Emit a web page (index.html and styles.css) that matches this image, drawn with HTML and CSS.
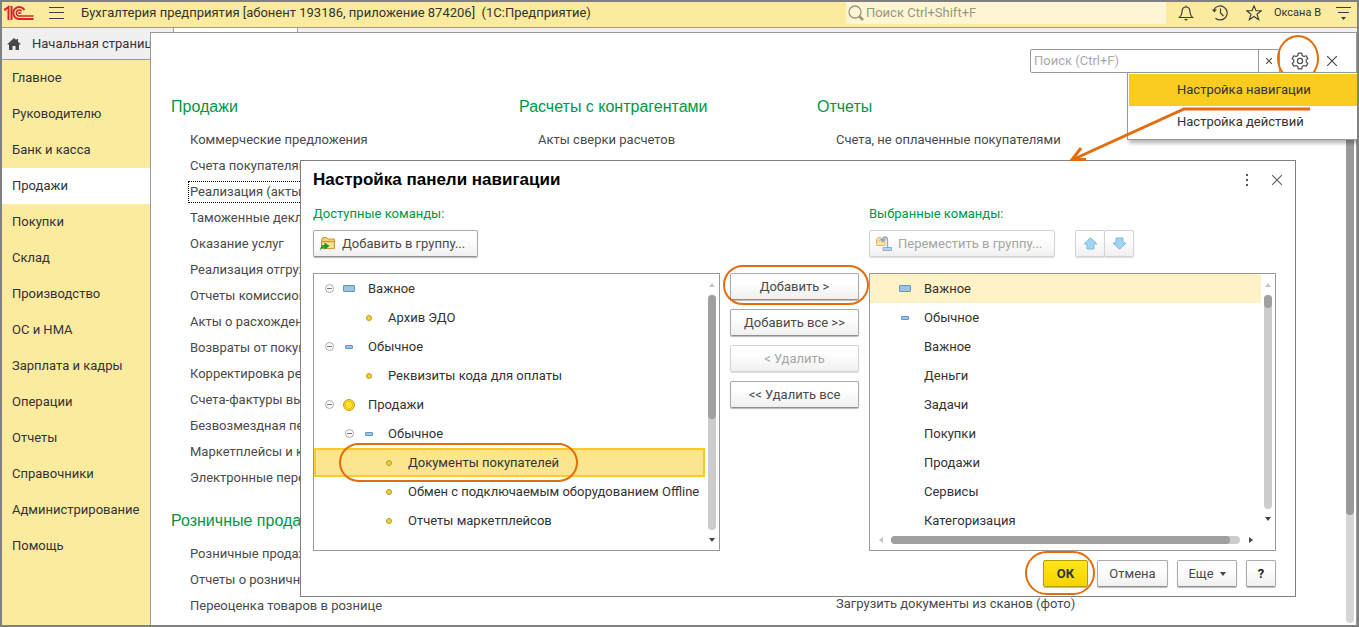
FILE: index.html
```html
<!DOCTYPE html>
<html lang="ru">
<head>
<meta charset="utf-8">
<title>Бухгалтерия предприятия</title>
<link rel="stylesheet" href="styles.css">
</head>
<body>
<div class="app">
  <header class="topbar">
    <svg class="logo" width="30" height="16" viewBox="0 0 30 16" fill="none" stroke="#d8232a" stroke-width="2">
      <path d="M0 4.500h2.500M4.500 15V2L1 4.500M7.500 15V1" stroke-width="2"/>
      <path d="M20.500 5A6 6 0 1 0 15.500 14H29.500"/>
      <path d="M17.500 6A3 3 0 1 0 15.500 11H29.500" stroke-width="1.500"/>
      <path d="M14 8h3.500" stroke-width="1.500"/>
    </svg>
    <button class="icon-btn burger" aria-label="Меню">
      <svg width="15" height="12" viewBox="0 0 15 12" stroke="#404040"><path d="M0 .5h15M0 5.500h15M0 11.500h15"/></svg>
    </button>
    <h1 class="app-title">Бухгалтерия предприятия [абонент 193186, приложение 874206]&nbsp; (1С:Предприятие)</h1>
    <label class="global-search">
      <svg width="16" height="16" viewBox="0 0 16 16" fill="none" stroke="#9b957c"><circle cx="7" cy="7" r="6" stroke-width="1.300"/><path d="M11 11l4 4" stroke-width="2.500"/></svg>
      <input type="text" placeholder="Поиск Ctrl+Shift+F" aria-label="Поиск">
    </label>
    <div class="tools">
      <button class="icon-btn" aria-label="Уведомления">
        <svg width="16" height="16" viewBox="0 0 16 16" fill="none" stroke="#3c3c3c" stroke-width="1.200"><path d="M8 .5v1.500M1.500 12.500C4 10.500 3.800 9 4 6.500 4.200 3.500 5.500 2 8 2s3.800 1.500 4 4.500c.2 2.500 0 4 2.500 6z"/><path d="M6 14h4l-1.500 1.500h-1z" fill="#3c3c3c" stroke="none"/></svg>
      </button>
      <button class="icon-btn" aria-label="История">
        <svg width="16" height="16" viewBox="0 0 16 16" fill="none" stroke="#3c3c3c" stroke-width="1.200"><path d="M1.800 5A7 7 0 1 1 3.500 13.200M8.500 3.500V8l3 3"/><path d="M0 4.500h5L2.300 7.500z" fill="#3c3c3c" stroke="none"/></svg>
      </button>
      <button class="icon-btn" aria-label="Избранное">
        <svg width="16" height="16" viewBox="0 0 16 16" fill="none" stroke="#3c3c3c" stroke-width="1.100"><path d="M8 .8l2 5h5.300l-4.300 3.400 1.700 5.500L8 11.500l-4.700 3.200L5 9.200.7 5.800H6z"/></svg>
      </button>
    </div>
    <span class="user">Оксана В</span>
    <button class="icon-btn service" aria-label="Сервис">
      <svg width="15" height="13" viewBox="0 0 15 13" stroke="#3c3c3c"><path d="M0 .5h15M2 5.500h11"/><path d="M5 10h5l-2.500 3z" fill="#3c3c3c" stroke="none"/></svg>
    </button>
  </header>

  <div class="body">
    <aside class="side">
      <a class="home" href="#">
        <svg width="14" height="12" viewBox="0 0 14 12" fill="#484848"><path d="M7 0L0 6.500h2V12h3.500V8h3v4H12V6.500h2L11 3.700V1H9.500v1.300z"/></svg>
        <span>Начальная страница</span>
      </a>
      <nav class="sections">
        <a href="#">Главное</a>
        <a href="#">Руководителю</a>
        <a href="#">Банк и касса</a>
        <a href="#" class="current">Продажи</a>
        <a href="#">Покупки</a>
        <a href="#">Склад</a>
        <a href="#">Производство</a>
        <a href="#">ОС и НМА</a>
        <a href="#">Зарплата и кадры</a>
        <a href="#">Операции</a>
        <a href="#">Отчеты</a>
        <a href="#">Справочники</a>
        <a href="#">Администрирование</a>
        <a href="#">Помощь</a>
      </nav>
    </aside>

    <main class="main">
      <div class="tabstrip"><span class="tab"></span></div>
      <div class="panel">
        <div class="panel-tools">
          <div class="panel-search">
            <input type="text" placeholder="Поиск (Ctrl+F)" aria-label="Поиск по панели">
            <button aria-label="Очистить"><svg width="6" height="6" viewBox="0 0 6 6" stroke="#555" stroke-width="1.200"><path d="M0 0l6 6M6 0L0 6"/></svg></button>
          </div>
          <div class="marked gear-wrap">
            <button class="icon-btn" aria-label="Настройка">
              <svg width="18" height="18" viewBox="0 0 18 18" fill="none" stroke="#4a4a4a" stroke-width="1.200" stroke-linejoin="round"><path d="M7.300 1.200h3.400l.5 2.300 1.700 1 2.200-.8 1.700 2.900-1.600 1.500v1.800l1.600 1.500-1.700 2.900-2.200-.8-1.700 1-.5 2.300H7.300l-.5-2.300-1.700-1-2.200.8-1.700-2.900 1.600-1.500V8.100L1.200 6.600l1.700-2.900 2.200.8 1.700-1z"/><circle cx="9" cy="9" r="2.600"/></svg>
            </button>
            <span class="ring ring-gear"></span>
          </div>
          <button class="icon-btn" aria-label="Закрыть панель">
            <svg width="10" height="10" viewBox="0 0 10 10" stroke="#4a4a4a" stroke-width="1.200"><path d="M0 0l10 10M10 0L0 10"/></svg>
          </button>
        </div>

        <div class="columns">
          <div class="column">
            <section>
              <h2>Продажи</h2>
              <ul>
                <li><a href="#">Коммерческие предложения</a></li>
                <li><a href="#">Счета покупателям</a></li>
                <li><a href="#" class="focused">Реализация (акты, накладные)</a></li>
                <li><a href="#">Таможенные декларации</a></li>
                <li><a href="#">Оказание услуг</a></li>
                <li><a href="#">Реализация отгруженных товаров</a></li>
                <li><a href="#">Отчеты комиссионеров</a></li>
                <li><a href="#">Акты о расхождениях</a></li>
                <li><a href="#">Возвраты от покупателей</a></li>
                <li><a href="#">Корректировка реализации</a></li>
                <li><a href="#">Счета-фактуры выданные</a></li>
                <li><a href="#">Безвозмездная передача</a></li>
                <li><a href="#">Маркетплейсы и комиссионеры</a></li>
                <li><a href="#">Электронные перевозки</a></li>
              </ul>
            </section>
            <section>
              <h2>Розничные продажи</h2>
              <ul>
                <li><a href="#">Розничные продажи</a></li>
                <li><a href="#">Отчеты о розничных продажах</a></li>
                <li><a href="#">Переоценка товаров в рознице</a></li>
              </ul>
            </section>
          </div>
          <div class="column">
            <section>
              <h2>Расчеты с контрагентами</h2>
              <ul><li><a href="#">Акты сверки расчетов</a></li></ul>
            </section>
          </div>
          <div class="column">
            <section>
              <h2>Отчеты</h2>
              <ul><li><a href="#">Счета, не оплаченные покупателями</a></li></ul>
            </section>
            <ul class="column-end"><li><a href="#">Загрузить документы из сканов (фото)</a></li></ul>
          </div>
        </div>
        <div class="page-scroll"><span></span></div>

        <div class="menu">
          <button class="active">Настройка навигации</button>
          <button>Настройка действий</button>
        </div>
      </div>
    </main>
  </div>

  <div class="dialog" role="dialog" aria-labelledby="dlg-title">
    <div class="dialog-head">
      <h2 id="dlg-title">Настройка панели навигации</h2>
      <button class="icon-btn" aria-label="Ещё"><svg width="4" height="12" viewBox="0 0 4 12" fill="#555"><path d="M1 0h2v2H1zM1 5h2v2H1zM1 10h2v2H1z"/></svg></button>
      <button class="icon-btn close" aria-label="Закрыть"><svg width="10" height="10" viewBox="0 0 10 10" stroke="#606060" stroke-width="1.200"><path d="M0 0l10 10M10 0L0 10"/></svg></button>
    </div>

    <div class="transfer">
      <section class="pane">
        <h3>Доступные команды:</h3>
        <div class="pane-tools">
          <button class="btn">
            <svg width="16" height="15" viewBox="0 0 16 15"><path d="M1.500 4l1-2.500h4L8 3h6.500v9.500h-13z" fill="#f5cf73" stroke="#cf9440"/><path d="M2 5.500h12" stroke="#cf9440"/><path d="M3 7h10.500v5H3z" fill="#fbdf95"/><path d="M0 14.500c.5-4 2-5.500 4.500-5.500V6.500L9.500 10l-5 3.800v-2.300C2.500 11.500 1.500 12.500 0 14.500z" fill="#18962e"/></svg>
            Добавить в группу...
          </button>
        </div>
        <div class="list">
          <div class="rows">
            <div class="row l0"><i class="exp"></i><i class="ico"><b class="bar"></b></i><span>Важное</span></div>
            <div class="row l1"><i class="exp none"></i><i class="ico"><b class="dot"></b></i><span>Архив ЭДО</span></div>
            <div class="row l0"><i class="exp"></i><i class="ico"><b class="bar small"></b></i><span>Обычное</span></div>
            <div class="row l1"><i class="exp none"></i><i class="ico"><b class="dot"></b></i><span>Реквизиты кода для оплаты</span></div>
            <div class="row l0"><i class="exp"></i><i class="ico"><b class="coin"></b></i><span>Продажи</span></div>
            <div class="row l1"><i class="exp"></i><i class="ico"><b class="bar small"></b></i><span>Обычное</span></div>
            <div class="row l2 selected"><i class="exp none"></i><i class="ico"><b class="dot"></b></i><span>Документы покупателей</span><span class="ring ring-row"></span></div>
            <div class="row l2"><i class="exp none"></i><i class="ico"><b class="dot"></b></i><span>Обмен с подключаемым оборудованием Offline</span></div>
            <div class="row l2"><i class="exp none"></i><i class="ico"><b class="dot"></b></i><span>Отчеты маркетплейсов</span></div>
          </div>
          <div class="vscroll">
            <i class="arr up"></i><span class="track"><span class="thumb thumb-left"></span></span><i class="arr down"></i>
          </div>
        </div>
      </section>

      <div class="moves">
        <div class="marked"><button class="btn">Добавить &gt;</button><span class="ring ring-add"></span></div>
        <button class="btn">Добавить все &gt;&gt;</button>
        <button class="btn" disabled>&lt; Удалить</button>
        <button class="btn">&lt;&lt; Удалить все</button>
      </div>

      <section class="pane">
        <h3>Выбранные команды:</h3>
        <div class="pane-tools">
          <button class="btn move-group" disabled>
            <svg width="16" height="16" viewBox="0 0 16 16" fill="none"><path d="M.5 3l1-1.500h3L6 3h3v6.500H.5z" fill="#fae3a8" stroke="#e0bd7c"/><path d="M1 5h8" stroke="#e0bd7c"/><path d="M7 4V2.500Q7 1 9 1t2.500 2V12M5 3.500h4L7 5.500z" stroke="#8fa9bb" stroke-width="1.300"/><path d="M7 11.500h8.500v3H7z" fill="#b5d6ea" stroke="#8fb0c8"/></svg>
            Переместить в группу...
          </button>
          <div class="order">
            <button class="btn" disabled aria-label="Выше"><svg width="15" height="13" viewBox="0 0 15 13" fill="#a0d6f3" stroke="#86b9d8"><path d="M7.500.7L14 7h-3v5H4V7H1z"/></svg></button>
            <button class="btn" disabled aria-label="Ниже"><svg width="15" height="13" viewBox="0 0 15 13" fill="#a0d6f3" stroke="#86b9d8"><path d="M7.500 12.300L14 6h-3V1H4v5H1z"/></svg></button>
          </div>
        </div>
        <div class="list">
          <div class="rows">
            <div class="row l0 current"><i class="exp none"></i><i class="ico"><b class="bar"></b></i><span>Важное</span></div>
            <div class="row l0"><i class="exp none"></i><i class="ico"><b class="bar small"></b></i><span>Обычное</span></div>
            <div class="row l0"><i class="exp none"></i><i class="ico"></i><span>Важное</span></div>
            <div class="row l0"><i class="exp none"></i><i class="ico"></i><span>Деньги</span></div>
            <div class="row l0"><i class="exp none"></i><i class="ico"></i><span>Задачи</span></div>
            <div class="row l0"><i class="exp none"></i><i class="ico"></i><span>Покупки</span></div>
            <div class="row l0"><i class="exp none"></i><i class="ico"></i><span>Продажи</span></div>
            <div class="row l0"><i class="exp none"></i><i class="ico"></i><span>Сервисы</span></div>
            <div class="row l0"><i class="exp none"></i><i class="ico"></i><span>Категоризация</span></div>
          </div>
          <div class="vscroll short">
            <i class="arr up"></i><span class="track"><span class="thumb thumb-right"></span></span><i class="arr down"></i>
          </div>
          <div class="hscroll">
            <i class="arr left"></i><span class="track"><span class="thumb"></span></span><i class="arr right"></i>
          </div>
        </div>
      </section>
    </div>

    <footer class="dialog-foot">
      <div class="marked"><button class="btn ok">ОК</button><span class="ring ring-ok"></span></div>
      <button class="btn cancel">Отмена</button>
      <button class="btn more">Еще <i class="arr down"></i></button>
      <button class="btn help">?</button>
    </footer>
  </div>

  <svg class="pointer" width="246" height="60" viewBox="0 0 246 60" fill="none" stroke="#e46c0a" stroke-width="3"><path d="M241 6H115L5 56"/><path d="M12 45L3 56.500H17" stroke-width="3"/></svg>
</div>
</body>
</html>
```
FILE: styles.css
```css
* { box-sizing: border-box; }

body {
  margin: 0;
  font: 13px/20px Roboto, "Liberation Sans", sans-serif;
  color: #333;
}

a { color: inherit; text-decoration: none; }
h1, h2, h3 { margin: 0; font-weight: 400; }
ul { margin: 0; padding: 0; list-style: none; }
button, input { font: inherit; color: inherit; }
svg { display: block; flex: none; }

.app {
  position: relative;
  display: flex;
  flex-direction: column;
  height: 100vh;
  overflow: hidden;
  border: 2px solid #808080;
  background: #fff;
}

.icon-btn {
  display: flex;
  align-items: center;
  justify-content: center;
  padding: 0;
  border: 0;
  background: none;
}

/* Top bar */
.topbar {
  display: flex;
  align-items: center;
  flex: none;
  height: 26px;
  padding: 0 6px 3px 2px;
  border-bottom: 1px solid #a8a070;
  background: #fbeb9e;
}
.burger { margin: 0 17px 0 15px; }
.app-title { flex: 1; font-size: 13px; white-space: nowrap; }
.global-search {
  display: flex;
  align-items: center;
  gap: 2px;
  width: 320px;
  height: 22px;
  padding-left: 2px;
  background: #fdf5d4;
}
.global-search input {
  flex: 1;
  min-width: 0;
  padding: 0;
  border: 0;
  outline: 0;
  background: none;
}
.global-search input::placeholder { color: #9b957c; }
.tools { display: flex; gap: 18px; margin: 0 12px; }
.user { font-size: 11px; white-space: nowrap; }
.service { margin-left: 15px; }

/* Sidebar */
.body { display: flex; flex: 1; min-height: 0; }
.side { display: flex; flex-direction: column; width: 148px; flex: none; background: #fbeb9e; }
.home {
  display: flex;
  align-items: center;
  gap: 11px;
  height: 32px;
  padding-left: 5px;
  overflow: hidden;
  border-bottom: 1px solid #999;
  background: #f0f0f0;
  white-space: nowrap;
}
.sections { display: flex; flex-direction: column; }
.sections a { padding: 8px 10px; }
.sections .current { background: #fff; }

/* Function panel */
.main { display: flex; flex-direction: column; flex: 1; min-width: 0; }
.tabstrip { height: 4px; flex: none; padding-left: 23px; background: #f0f0f0; }
.tab { display: block; width: 125px; height: 4px; border: solid #a0a0a0; border-width: 0 1px; background: #fff; }
.panel {
  position: relative;
  flex: 1;
  min-height: 0;
  border: solid #999;
  border-width: 1px 1px 0 1px;
}
.panel-tools {
  display: flex;
  align-items: center;
  justify-content: flex-end;
  height: 56px;
  padding-right: 19px;
}
.panel-search {
  display: flex;
  width: 250px;
  height: 24px;
  border: 1px solid #999;
  border-radius: 2px;
}
.panel-search input { flex: 1; min-width: 0; padding: 0 3px; border: 0; outline: 0; background: none; }
.panel-search input::placeholder { color: #aaa; }
.panel-search button {
  display: flex;
  align-items: center;
  justify-content: center;
  width: 21px;
  padding: 0;
  border: 0;
  border-left: 1px solid #999;
  background: none;
}
.gear-wrap { margin: 0 18px 0 11px; }

.columns { display: flex; padding: 7px 0 0 20px; color: #4a4a4a; }
.column { width: 298px; flex: none; }
.column:first-child { width: 348px; }
.columns h2 {
  height: 22px;
  margin-bottom: 9px;
  font: 16px/22px "Liberation Sans", sans-serif;
  color: #009646;
  white-space: nowrap;
}
.columns li { display: flex; align-items: center; height: 26px; padding-left: 19px; white-space: nowrap; }
.columns .focused { width: 200px; margin-left: -1px; padding-left: 1px; outline: 1px dotted #000; }
.column section + section { margin-top: 19px; }
.column-end { margin-top: 438px; }

.page-scroll { position: absolute; top: 50px; right: 2px; bottom: 2px; width: 8px; border-radius: 4px; background: #d6d6d6; }
.page-scroll span { display: block; height: 80%; border-radius: 4px; background: #999; }

.menu {
  position: absolute;
  top: 39px;
  right: -1px;
  display: flex;
  flex-direction: column;
  width: 230px;
  padding: 1px 0 1px 1px;
  border: solid #999;
  border-width: 1px 0 1px 1px;
  background: #fff;
  box-shadow: 2px 3px 4px rgba(0, 0, 0, .3);
}
.menu button { height: 32px; padding: 0 0 0 48px; border: 0; background: none; text-align: left; }
.menu .active { background: #facc20; }

/* Dialog window */
.dialog {
  position: absolute;
  top: 158px;
  left: 298px;
  right: 61px;
  padding: 0 19px 9px 12px;
  border: 1px solid #808080;
  background: #fff;
}
.dialog-head { display: flex; align-items: center; height: 37px; margin-right: -8px; }
.dialog-head h2 { flex: 1; font: 700 17px/24px "Liberation Sans", sans-serif; color: #000; }
.close { margin: 0 2px 0 23px; }

.transfer { display: grid; grid-template-columns: 1fr 129px 1fr; gap: 10px; }
.pane { min-width: 0; }
.pane h3 { height: 32px; padding-top: 6px; font-size: 13px; color: #009646; }
.pane-tools { display: flex; gap: 20px; margin-bottom: 16px; }

.btn {
  display: flex;
  align-items: center;
  justify-content: center;
  gap: 6px;
  height: 27px;
  padding: 0 12px 0 6px;
  border: 1px solid #aaa;
  border-bottom-color: #909090;
  border-radius: 2px;
  background: linear-gradient(#fff 30%, #f0f0f0);
  box-shadow: 0 1px 1px #bbb;
  color: #4a4a4a;
  white-space: nowrap;
}
.btn:disabled { border-color: #d4d4d4; box-shadow: 0 1px 1px #ddd; color: #a6a6a6; }
.order { display: flex; }
.order .btn { width: 30px; padding: 0; }
.order .btn + .btn { margin-left: -1px; }

.moves { display: flex; flex-direction: column; gap: 9px; padding-top: 75px; }
.moves .btn { width: 100%; padding: 0; }

.list {
  display: grid;
  grid-template-columns: 1fr 14px;
  height: 278px;
  border: 1px solid #999;
  background: #fff;
}
.rows { min-width: 0; }
.row { position: relative; display: flex; align-items: center; height: 29px; padding-left: 5px; white-space: nowrap; }
.l1 { padding-left: 25px; }
.l2 { padding-left: 45px; }
.row > span { padding-top: 1px; }
.current.row { background: #fef2c7; }
.selected::before { content: ""; position: absolute; inset: 0; border: 2px solid #facc20; background: #fce58f; }
.selected > * { position: relative; }

.exp { flex: none; width: 20px; height: 9px; background: url("data:image/svg+xml,%3Csvg xmlns='http://www.w3.org/2000/svg' width='9' height='9' fill='none'%3E%3Ccircle cx='4.500' cy='4.500' r='4' stroke='%23aaa'/%3E%3Cpath d='M2 4.500h5' stroke='%23777'/%3E%3C/svg%3E") center no-repeat; }
.exp.none { background: none; }
.ico { display: flex; flex: none; justify-content: center; width: 20px; margin-right: 9px; }
.bar { width: 12px; height: 7px; border: 1px solid #5f98c0; border-radius: 1px; background: #9cc4e0; }
.bar.small { width: 8px; height: 4px; }
.dot { width: 6px; height: 6px; border: 1px solid #b99a20; border-radius: 50%; background: #f8d030; }
.coin { width: 12px; height: 12px; border: 1px solid #c6a11c; border-radius: 50%; background: radial-gradient(#ffe628 45%, #e6bd1c 50%, #fbd524 60%); }

.vscroll { display: flex; flex-direction: column; align-items: center; padding: 9px 0 8px; }
.vscroll .track { flex: 1; width: 8px; margin: 8px 0; border-radius: 4px; background: #ccc; }
.thumb { display: block; border-radius: 4px; background: #a0a0a0; }
.thumb-left { height: 124px; }
.thumb-right { height: 13px; }
.hscroll { grid-column: 1 / -1; display: flex; align-items: center; height: 15px; padding: 0 22px 6px 9px; }
.hscroll .track { flex: 1; height: 8px; margin: 0 9px 0 8px; border-radius: 4px; background: #ccc; }
.hscroll .thumb { width: 97%; height: 8px; }
.vscroll.short { padding-bottom: 14px; }

.arr { flex: none; width: 0; height: 0; border: 3px solid transparent; }
.arr.up { border-top: 0; border-bottom: 4px solid #c4c4c4; }
.arr.down { border-bottom: 0; border-top: 4px solid #444; }
.arr.left { border-left: 0; border-right: 4px solid #c4c4c4; }
.arr.right { border-right: 0; border-left: 4px solid #444; }

.dialog-foot { display: flex; justify-content: flex-end; gap: 9px; padding-top: 9px; }
.dialog-foot .btn { padding: 0; }
.dialog-foot .ok { width: 45px; border-color: #b39b00; background: linear-gradient(#ffe619, #f5d400); color: #333; font-weight: 700; }
.dialog-foot .cancel { width: 71px; }
.dialog-foot .more { width: 60px; }
.dialog-foot .help { width: 30px; color: #222; font-weight: 700; }

/* Callouts */
.marked { position: relative; }
.ring { position: absolute; border: 2px solid #e46c0a; pointer-events: none; }
.ring-gear { inset: -17px -10px -12px -14px; border-radius: 50%; }
.ring-add { inset: -8px -10px -5px -7px; border-radius: 20px; }
.row .ring-row { position: absolute; left: 25px; top: -5px; bottom: -5px; width: 239px; border-radius: 20px; }
.ring-ok { inset: -9px -7px -8px -18px; border-radius: 23px; }
.pointer { position: absolute; top: 101px; right: 42px; pointer-events: none; }
```
